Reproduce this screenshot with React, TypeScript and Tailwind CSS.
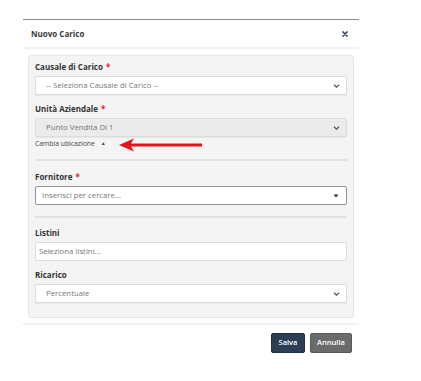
import React from 'react';

const Chevron = () => (
  <svg width="7" height="5" viewBox="0 0 7 5" className="absolute right-[6px] top-1/2 -translate-y-1/2">
    <path d="M1 1.2 L3.5 3.6 L6 1.2" fill="none" stroke="#555" strokeWidth="1.3" />
  </svg>
);

const Label = ({ text, required }: { text: string; required?: boolean }) => (
  <div className="h-[12px] flex items-center text-[8px] font-bold text-[#333] leading-none">
    {text}
    {required && <span className="ml-[3px] text-[#e3262b]">*</span>}
  </div>
);

const SelectBox = ({ value, disabled }: { value: string; disabled?: boolean }) => (
  <div
    className={`relative h-[19px] rounded-[2px] border border-[#dcdcdc] shadow-[0_1px_1px_rgba(0,0,0,0.06)] flex items-center pl-[10px] text-[7.8px] text-[#777] ${
      disabled ? 'bg-[#ebebeb]' : 'bg-white'
    }`}
  >
    {value}
    <Chevron />
  </div>
);

const App = () => {
  return (
    <div className="w-[421px] h-[381px] bg-white pt-[19px] pl-[23px] font-['Open_Sans',sans-serif]">
      <div className="w-[336px] border-t border-[#8a8a8a] bg-white">
        {/* header */}
        <div className="h-[29px] flex items-center justify-between px-[8px] border-b-2 border-[#f1f1f1]">
          <span className="text-[8px] font-bold text-[#3a3a3a]">Nuovo Carico</span>
          <svg width="6" height="6" viewBox="0 0 6 6" className="mr-[3px]">
            <path d="M1 1 L5 5 M5 1 L1 5" stroke="#2d3e55" strokeWidth="1.7" strokeLinecap="round" />
          </svg>
        </div>

        {/* body */}
        <div className="px-[5px] pt-[6px]">
          <div className="bg-[#f4f4f4] border border-[#e6e6e6] rounded-[3px] px-[6px] pt-[5px] pb-[14px]">
            <Label text="Causale di Carico" required />
            <div className="mt-[3px]">
              <SelectBox value="-- Seleziona Causale di Carico --" />
            </div>

            <div className="mt-[8px]">
              <Label text="Unità Aziendale" required />
            </div>
            <div className="mt-[3px]">
              <SelectBox value="Punto Vendita Di 1" disabled />
            </div>

            <div className="relative h-[12px] mt-[1px] flex items-center text-[6.8px] text-[#444]">
              Cambia ubicazione
              <span className="ml-[6px] text-[5px]">▲</span>
              <svg width="86" height="14" viewBox="0 0 86 14" className="absolute left-[84px] top-[0px]">
                <polygon points="0,7 15,0.5 12,5.5 83,5.5 83,8.5 12,8.5 15,13.5" fill="#e3141c" />
              </svg>
            </div>

            <div className="mt-[9px] border-t-2 border-[#e2e2e2]" />

            <div className="mt-[10px]">
              <Label text="Fornitore" required />
            </div>
            <div className="mt-[3px] relative h-[19px] rounded-[2px] border-[1.5px] border-[#8e949c] bg-white flex items-center pl-[6px] text-[7.8px] text-[#777]">
              Inserisci per cercare...
              <svg width="6" height="4" viewBox="0 0 6 4" className="absolute right-[7px] top-1/2 -translate-y-1/2">
                <polygon points="0.5,0.5 5.5,0.5 3,3.5" fill="#333" />
              </svg>
            </div>

            <div className="mt-[11px] border-t-2 border-[#e2e2e2]" />

            <div className="mt-[9px]">
              <Label text="Listini" />
            </div>
            <div className="mt-[3px] h-[19px] rounded-[2px] border border-[#dcdcdc] bg-white flex items-center pl-[3px] text-[7.8px] text-[#777]">
              Seleziona listini...
            </div>

            <div className="mt-[8px]">
              <Label text="Ricarico" />
            </div>
            <div className="mt-[3px]">
              <SelectBox value="Percentuale" />
            </div>
          </div>
        </div>

        {/* footer */}
        <div className="mt-[5px] border-t-2 border-[#f1f1f1] flex justify-end gap-[5px] pt-[8px] pr-[7px]">
          <button className="h-[20px] w-[34px] rounded-[2px] bg-[#2b3e56] text-white text-[7.5px] font-semibold border border-[#1e2d40]">
            Salva
          </button>
          <button className="h-[20px] w-[42px] rounded-[2px] bg-[#6b6b6b] text-white text-[7.5px] font-semibold border border-[#5a5a5a]">
            Annulla
          </button>
        </div>
      </div>
    </div>
  );
};

export default App;
